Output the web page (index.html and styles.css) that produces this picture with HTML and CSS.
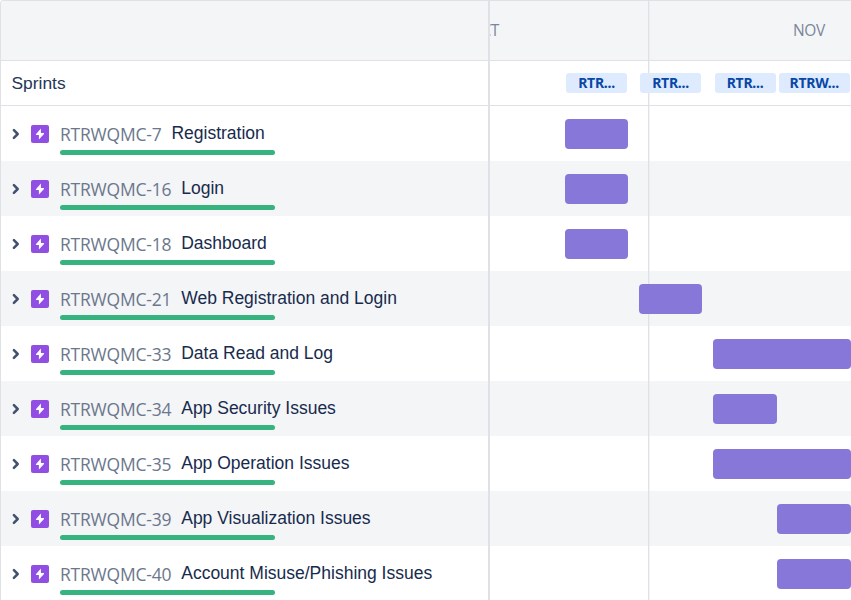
FILE: index.html
```
<!DOCTYPE html>
<html lang="en">
<head>
<meta charset="utf-8">
<title>Roadmap</title>
<link rel="stylesheet" href="styles.css">
</head>
<body>
<svg class="defs" width="0" height="0" aria-hidden="true">
  <symbol id="chevron" viewBox="0 0 8 12"><path d="M1.9 2.2 L5.7 6 L1.9 9.8" fill="none" stroke="#42526e" stroke-width="2.5" stroke-linecap="round" stroke-linejoin="round"/></symbol>
  <symbol id="epic" viewBox="0 0 18 18"><rect width="18" height="18" rx="2" fill="#904ee2"/><path d="M9.9 3.6 L4.9 9.2 Q4.6 10 5.4 10 H7.9 V14.4 L13 8.9 Q13.3 8 12.5 8 H9.9 Z" fill="#fff"/></symbol>
</svg>
<main class="roadmap">
  <section class="issues">
    <div class="head"></div>
    <div class="sprints"><span class="sprints-label">Sprints</span></div>
    <div class="row"><svg class="chevron"><use href="#chevron"/></svg><svg class="epic"><use href="#epic"/></svg><div class="summary"><span class="key">RTRWQMC-7</span><span class="title">Registration</span><div class="progress"></div></div></div>
    <div class="row"><svg class="chevron"><use href="#chevron"/></svg><svg class="epic"><use href="#epic"/></svg><div class="summary"><span class="key">RTRWQMC-16</span><span class="title">Login</span><div class="progress"></div></div></div>
    <div class="row"><svg class="chevron"><use href="#chevron"/></svg><svg class="epic"><use href="#epic"/></svg><div class="summary"><span class="key">RTRWQMC-18</span><span class="title">Dashboard</span><div class="progress"></div></div></div>
    <div class="row"><svg class="chevron"><use href="#chevron"/></svg><svg class="epic"><use href="#epic"/></svg><div class="summary"><span class="key">RTRWQMC-21</span><span class="title">Web Registration and Login</span><div class="progress"></div></div></div>
    <div class="row"><svg class="chevron"><use href="#chevron"/></svg><svg class="epic"><use href="#epic"/></svg><div class="summary"><span class="key">RTRWQMC-33</span><span class="title">Data Read and Log</span><div class="progress"></div></div></div>
    <div class="row"><svg class="chevron"><use href="#chevron"/></svg><svg class="epic"><use href="#epic"/></svg><div class="summary"><span class="key">RTRWQMC-34</span><span class="title">App Security Issues</span><div class="progress"></div></div></div>
    <div class="row"><svg class="chevron"><use href="#chevron"/></svg><svg class="epic"><use href="#epic"/></svg><div class="summary"><span class="key">RTRWQMC-35</span><span class="title">App Operation Issues</span><div class="progress"></div></div></div>
    <div class="row"><svg class="chevron"><use href="#chevron"/></svg><svg class="epic"><use href="#epic"/></svg><div class="summary"><span class="key">RTRWQMC-39</span><span class="title">App Visualization Issues</span><div class="progress"></div></div></div>
    <div class="row"><svg class="chevron"><use href="#chevron"/></svg><svg class="epic"><use href="#epic"/></svg><div class="summary"><span class="key">RTRWQMC-40</span><span class="title">Account Misuse/Phishing Issues</span><div class="progress"></div></div></div>
  </section>
  <section class="timeline">
    <div class="head months"><span class="month previous">OCT</span><span class="month">NOV</span></div>
    <div class="sprints">
      <span class="chip" style="margin-left:76px;width:61px">RTR...</span>
      <span class="chip" style="margin-left:13px;width:61px">RTR...</span>
      <span class="chip" style="margin-left:13.5px;width:61px">RTR...</span>
      <span class="chip" style="margin-left:3px;width:71.5px">RTRW...</span>
    </div>
    <div class="row"><div class="bar" style="margin-left:74.5px;width:63.5px"></div></div>
    <div class="row"><div class="bar" style="margin-left:74.5px;width:63.5px"></div></div>
    <div class="row"><div class="bar" style="margin-left:74.5px;width:63.5px"></div></div>
    <div class="row"><div class="bar" style="margin-left:149px;width:63.4px"></div></div>
    <div class="row"><div class="bar" style="margin-left:223.2px;width:137.8px"></div></div>
    <div class="row"><div class="bar" style="margin-left:223.2px;width:63.5px"></div></div>
    <div class="row"><div class="bar" style="margin-left:223.2px;width:137.8px"></div></div>
    <div class="row"><div class="bar" style="margin-left:287px;width:74px"></div></div>
    <div class="row"><div class="bar" style="margin-left:287px;width:74px"></div></div>
  </section>
</main>
</body>
</html>
```
FILE: styles.css
```
* { box-sizing: border-box; }
body {
  margin: 0;
  height: 600px;
  overflow: hidden;
  background: #fff;
  font-family: "Liberation Sans", Arial, sans-serif;
  color: #172b4d;
}
.defs { display: block; }
.roadmap {
  display: grid;
  grid-template-columns: 489px 1fr;
  height: 600px;
  border: solid #dfe1e6;
  border-width: 1px 0 0 1px;
  border-top-left-radius: 4px;
  overflow: hidden;
}
.issues { border-right: 2px solid #dfe1e6; }
.timeline { position: relative; z-index: 0; overflow: hidden; }
.timeline::before {
  content: "";
  position: absolute;
  z-index: 1;
  top: 0;
  bottom: 0;
  left: 158px;
  width: 2px;
  background: linear-gradient(to right, #dfe1e6 1px, rgba(223, 225, 230, 0.35) 1px);
}
.head {
  height: 60px;
  background: #f4f5f7;
  border-bottom: 1px solid #dfe1e6;
}
.months {
  display: flex;
  align-items: center;
  padding-bottom: 1px;
  font: 15.5px/20px "Open Sans", "Noto Sans", sans-serif;
  letter-spacing: -0.4px;
  color: #7a869a;
}
.month { margin-left: 294px; }
.month.previous { width: 9px; margin-left: 0; display: flex; justify-content: flex-end; }
.sprints {
  display: flex;
  align-items: center;
  height: 45px;
  border-bottom: 1px solid #dfe1e6;
}
.sprints-label { margin-left: 10.5px; font-size: 17.4px; color: #253858; }
.chip {
  position: relative;
  z-index: 2;
  height: 20px;
  border-radius: 3px;
  background: #deebff;
  color: #0747a6;
  font: 700 14px/20px "Noto Sans", "Open Sans", sans-serif;
  letter-spacing: -0.25px;
  text-align: center;
}
.row { display: flex; height: 55px; }
.row:nth-child(even) { background: #f4f5f7; }
.issues .row { padding-left: 11px; }
.row:last-child { height: 54px; }
.chevron { width: 8px; height: 12px; margin-top: 21.5px; }
.epic { width: 18px; height: 18px; margin: 19px 0 0 11px; }
.summary {
  display: grid;
  grid-template-columns: auto 1fr;
  grid-template-rows: 44px 5px;
  margin-left: 11px;
  white-space: nowrap;
}
.key {
  padding-top: 16px;
  font: 400 17.5px/24px "Open Sans", "Noto Sans", sans-serif;
  letter-spacing: -0.22px;
  color: #6b778c;
}
.title {
  padding-top: 15px;
  margin-left: 10px;
  font-size: 17.5px;
  line-height: 24px;
}
.progress { width: 215px; height: 5px; border-radius: 3px; background: #36b37e; grid-column: 1 / -1; }
.bar {
  position: relative;
  z-index: 2;
  flex: none;
  height: 29.6px;
  margin-top: 13px;
  border-radius: 4px;
  background: #8777d9;
}
```
